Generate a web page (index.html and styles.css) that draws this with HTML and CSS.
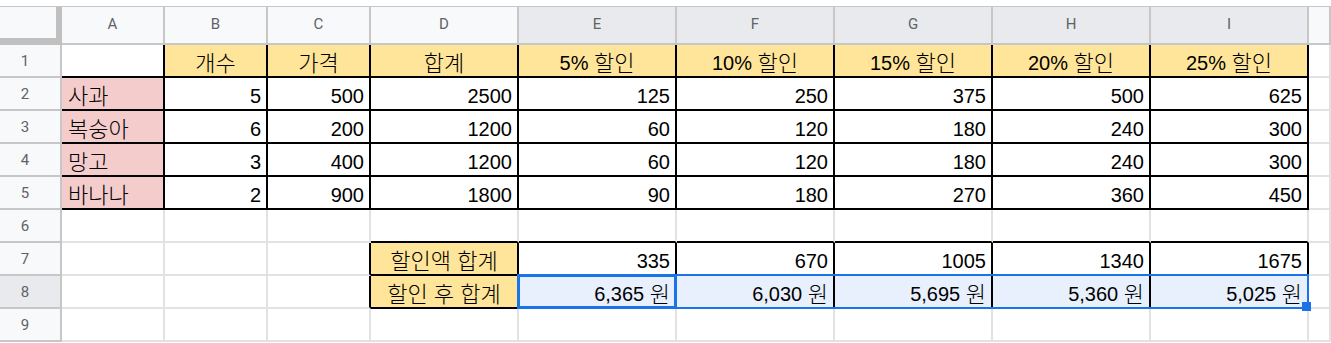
FILE: index.html
```html
<!DOCTYPE html>
<html lang="ko">
<head>
<meta charset="utf-8">
<title>Sheet</title>
<link rel="stylesheet" href="styles.css">
</head>
<body>
<div class="sheet">
  <div class="corner"></div>
  <div class="h">A</div><div class="h">B</div><div class="h">C</div><div class="h">D</div>
  <div class="h hs">E</div><div class="h hs">F</div><div class="h hs">G</div><div class="h hs">H</div><div class="h hs">I</div>
  <div class="h"></div>

  <div class="rh">1</div>
  <div class="c bR bB"></div>
  <div class="c m y bR bB"><span><span class="k">개수</span></span></div>
  <div class="c m y bR bB"><span><span class="k">가격</span></span></div>
  <div class="c m y bR bB"><span><span class="k">합계</span></span></div>
  <div class="c m y bR bB"><span>5% <span class="k">할인</span></span></div>
  <div class="c m y bR bB"><span>10% <span class="k">할인</span></span></div>
  <div class="c m y bR bB"><span>15% <span class="k">할인</span></span></div>
  <div class="c m y bR bB"><span>20% <span class="k">할인</span></span></div>
  <div class="c m y bR bB"><span>25% <span class="k">할인</span></span></div>
  <div class="c"></div>

  <div class="rh">2</div>
  <div class="c p bR bB"><span><span class="k">사과</span></span></div>
  <div class="c r bR bB">5</div><div class="c r bR bB">500</div><div class="c r bR bB">2500</div>
  <div class="c r bR bB">125</div><div class="c r bR bB">250</div><div class="c r bR bB">375</div><div class="c r bR bB">500</div><div class="c r bR bB">625</div>
  <div class="c"></div>

  <div class="rh">3</div>
  <div class="c p bR bB"><span><span class="k">복숭아</span></span></div>
  <div class="c r bR bB">6</div><div class="c r bR bB">200</div><div class="c r bR bB">1200</div>
  <div class="c r bR bB">60</div><div class="c r bR bB">120</div><div class="c r bR bB">180</div><div class="c r bR bB">240</div><div class="c r bR bB">300</div>
  <div class="c"></div>

  <div class="rh">4</div>
  <div class="c p bR bB"><span><span class="k">망고</span></span></div>
  <div class="c r bR bB">3</div><div class="c r bR bB">400</div><div class="c r bR bB">1200</div>
  <div class="c r bR bB">60</div><div class="c r bR bB">120</div><div class="c r bR bB">180</div><div class="c r bR bB">240</div><div class="c r bR bB">300</div>
  <div class="c"></div>

  <div class="rh">5</div>
  <div class="c p bR bB"><span><span class="k">바나나</span></span></div>
  <div class="c r bR bB">2</div><div class="c r bR bB">900</div><div class="c r bR bB">1800</div>
  <div class="c r bR bB">90</div><div class="c r bR bB">180</div><div class="c r bR bB">270</div><div class="c r bR bB">360</div><div class="c r bR bB">450</div>
  <div class="c"></div>

  <div class="rh">6</div>
  <div class="c"></div><div class="c"></div><div class="c"></div>
  <div class="c bB"></div><div class="c bB"></div><div class="c bB"></div><div class="c bB"></div><div class="c bB"></div><div class="c bB"></div>
  <div class="c"></div>

  <div class="rh">7</div>
  <div class="c"></div><div class="c"></div><div class="c bR"></div>
  <div class="c m y bR bB"><span><span class="k">할인액 합계</span></span></div>
  <div class="c r bR bB">335</div><div class="c r bR bB">670</div><div class="c r bR bB">1005</div><div class="c r bR bB">1340</div><div class="c r bR bB">1675</div>
  <div class="c"></div>

  <div class="rh rs">8</div>
  <div class="c"></div><div class="c"></div><div class="c bR"></div>
  <div class="c m y bR bB"><span><span class="k">할인 후 합계</span></span></div>
  <div class="c r s bR bB anchor"><span>6,365 <span class="k">원</span></span>
    <div class="range"><div class="handle"></div></div>
    <div class="active"></div>
  </div>
  <div class="c r s bR bB"><span>6,030 <span class="k">원</span></span></div>
  <div class="c r s bR bB"><span>5,695 <span class="k">원</span></span></div>
  <div class="c r s bR bB"><span>5,360 <span class="k">원</span></span></div>
  <div class="c r s bR bB"><span>5,025 <span class="k">원</span></span></div>
  <div class="c"></div>

  <div class="rh">9</div>
  <div class="c"></div><div class="c"></div><div class="c"></div><div class="c"></div><div class="c"></div><div class="c"></div><div class="c"></div><div class="c"></div><div class="c"></div><div class="c"></div>
</div>
</body>
</html>
```

FILE: styles.css
```css
html, body {
  margin: 0;
  padding: 0;
  background: #ffffff;
  overflow: hidden;
}

.sheet {
  margin-top: 6px;
  border-top: 1px solid #c7c7c7;
  display: grid;
  grid-template-columns: 62px 103px 103px 103px 148px 158px 158px 158px 158px 158px 1fr;
  grid-template-rows: 38px repeat(9, 33px);
  font-family: "Liberation Sans", "Noto Sans CJK KR", sans-serif;
}

.sheet > div {
  box-sizing: border-box;
}

.corner {
  background: #f8f9fa;
  border-right: 6px solid #c0c0c0;
  border-bottom: 7px solid #c0c0c0;
}

.h {
  background: #f8f9fa;
  border-right: 2px solid #c7c7c7;
  border-bottom: 2px solid #c7c7c7;
  display: flex;
  align-items: center;
  justify-content: center;
  font-family: Roboto, "Liberation Sans", sans-serif;
  font-size: 15px;
  color: #5f6368;
  padding-bottom: 2px;
}

.h.hs {
  background: #e8eaed;
}

.rh {
  background: #f8f9fa;
  border-right: 2px solid #c7c7c7;
  border-bottom: 2px solid #c7c7c7;
  display: flex;
  align-items: center;
  justify-content: center;
  padding-right: 10px;
  font-family: Roboto, "Liberation Sans", sans-serif;
  font-size: 15px;
  color: #5f6368;
}

.rh.rs {
  background: #e8eaed;
}

.c {
  border-right: 2px solid #e2e2e2;
  border-bottom: 2px solid #e2e2e2;
  display: flex;
  align-items: flex-end;
  justify-content: flex-start;
  padding: 0 5px 1px 6px;
  font-size: 20px;
  line-height: 23px;
  color: #000;
  white-space: nowrap;
}

.k {
  font-family: "Noto Sans CJK KR", sans-serif;
  font-size: 22px;
  font-weight: 300;
  line-height: 0;
  vertical-align: -1px;
}

.c.r { justify-content: flex-end; }
.c.m { justify-content: center; padding-left: 0; padding-right: 0; }
.c.y { background: #ffe599; }
.c.p { background: #f4cccc; }
.c.s { background: #e8f0fd; }
.c.bR { border-right-color: #000; }
.c.bB { border-bottom-color: #000; }

.anchor {
  position: relative;
}

.range {
  position: absolute;
  left: -2px;
  top: -2px;
  width: 792px;
  height: 35px;
  box-sizing: border-box;
  border: 2px solid #1a73e8;
  z-index: 2;
}

.active {
  position: absolute;
  left: -2px;
  top: -2px;
  width: 160px;
  height: 35px;
  box-sizing: border-box;
  border: 3px solid #1a73e8;
  z-index: 3;
}

.handle {
  position: absolute;
  right: -4px;
  bottom: -4px;
  width: 9px;
  height: 9px;
  background: #1a73e8;
}
```
